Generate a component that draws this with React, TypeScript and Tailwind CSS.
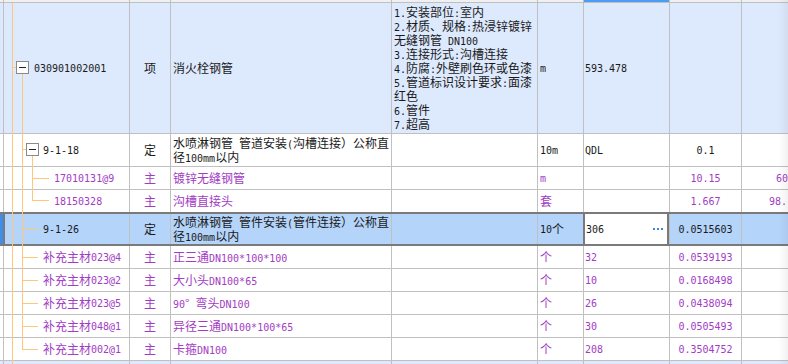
import { FC } from 'react'

// ASCII runs use a half-width mono face, the rest the CJK face
const Txt: FC<{ s: string }> = ({ s }) => (
  <>
    {s
      .split(/([\x20-\x7e]+)/)
      .filter(Boolean)
      .map((p, i) =>
        /^[\x20-\x7e]+$/.test(p) ? (
          <span key={i} className="font-['DejaVu_Sans_Mono',monospace] text-[10px]">
            {p}
          </span>
        ) : (
          <span key={i}>{p}</span>
        )
      )}
  </>
)

const Lines: FC<{ lines: string[] }> = ({ lines }) => (
  <div className="flex flex-col justify-center">
    {lines.map((l, i) => (
      <div key={i} className="h-[14px] leading-[14px] whitespace-nowrap">
        <Txt s={l} />
      </div>
    ))}
  </div>
)

type R = {
  code: string
  pad: string
  kind: string
  name: string[]
  unit: string
  qty?: string
  val?: string
  extra?: string
  extraPad?: string
  purple?: boolean
  h: string
}

const rows: R[] = [
  {
    code: '9-1-18',
    pad: 'pl-[39px]',
    kind: '定',
    name: ['水喷淋钢管 管道安装(沟槽连接）公称直', '径100mm以内'],
    unit: '10m',
    qty: 'QDL',
    val: '0.1',
    h: 'h-[33px] border-b',
  },
  {
    code: '17010131@9',
    pad: 'pl-[50px]',
    kind: '主',
    name: ['镀锌无缝钢管'],
    unit: 'm',
    val: '10.15',
    extra: '60',
    extraPad: 'pl-[34px]',
    purple: true,
    h: 'h-[23px] border-b',
  },
  {
    code: '18150328',
    pad: 'pl-[50px]',
    kind: '主',
    name: ['沟槽直接头'],
    unit: '套',
    val: '1.667',
    extra: '98.',
    extraPad: 'pl-[27px]',
    purple: true,
    h: 'h-[22px]',
  },
]

const subs: R[] = [
  ['补充主材023@4', '正三通DN100*100*100', '32', '0.0539193'],
  ['补充主材023@2', '大小头DN100*65', '10', '0.0168498'],
  ['补充主材023@5', '90° 弯头DN100', '26', '0.0438094'],
  ['补充主材048@1', '异径三通DN100*100*65', '30', '0.0505493'],
  ['补充主材002@1', '卡箍DN100', '208', '0.3504752'],
].map(([code, name, qty, val]) => ({
  code,
  pad: 'pl-[39px]',
  kind: '主',
  name: [name],
  unit: '个',
  qty,
  val,
  purple: true,
  h: 'h-[23px] border-b',
}))

const Row: FC<{ r: R }> = ({ r }) => (
  <div className={`flex border-[#c0c0c0] ${r.h} ${r.purple ? 'text-[#a23cc4]' : ''}`}>
    <div className="w-[3px]" />
    <div className={`flex w-[126px] items-center border-l border-[#c0c0c0] ${r.pad}`}>
      <Txt s={r.code} />
    </div>
    <div className="flex w-[41px] items-center justify-center border-l border-[#c0c0c0]">{r.kind}</div>
    <div className="flex w-[221px] items-center border-l border-[#c0c0c0] pl-[2px]">
      <Lines lines={r.name} />
    </div>
    <div className="flex w-[146px] items-center border-l border-[#c0c0c0] pl-[2px]" />
    <div className="flex w-[46px] items-center border-l border-[#c0c0c0] pl-[2px]">
      <Txt s={r.unit} />
    </div>
    <div className="flex w-[86px] items-center border-l border-[#c0c0c0] pl-[1px]">
      <Txt s={r.qty ?? ''} />
    </div>
    <div className="flex w-[72px] items-center justify-center border-l border-[#c0c0c0]">
      <Txt s={r.val ?? ''} />
    </div>
    <div className={`flex flex-1 items-center overflow-hidden whitespace-nowrap border-l border-[#c0c0c0] ${r.extraPad ?? ''}`}>
      <Txt s={r.extra ?? ''} />
    </div>
  </div>
)

const Box: FC<{ x: number; y: number }> = ({ x, y }) => (
  <g>
    <rect x={x + 0.5} y={y + 0.5} width="12" height="12" fill="#fff" stroke="#8a8a8a" />
    <line x1={x + 3} y1={y + 6.5} x2={x + 10} y2={y + 6.5} stroke="#222" />
  </g>
)

const Tree: FC = () => (
  <svg className="pointer-events-none absolute left-0 top-0" width="60" height="364" shapeRendering="crispEdges">
    <g stroke="#ffc77d" strokeWidth="1">
      <line x1="12.5" y1="3" x2="12.5" y2="364" />
      <line x1="12.5" y1="67.5" x2="16" y2="67.5" />
      <line x1="22.5" y1="74" x2="22.5" y2="349.5" />
      <line x1="22.5" y1="149.5" x2="26" y2="149.5" />
      <line x1="32.5" y1="156" x2="32.5" y2="200.5" />
      <line x1="32.5" y1="178.5" x2="49" y2="178.5" />
      <line x1="32.5" y1="200.5" x2="49" y2="200.5" />
      {[228.5, 257.5, 280.5, 303.5, 326.5, 349.5].map(y => (
        <line key={y} x1="22.5" y1={y} x2="38" y2={y} />
      ))}
    </g>
    <Box x={16} y={61} />
    <Box x={26} y={143} />
  </svg>
)

const spec = [
  '1.安装部位:室内',
  '2.材质、规格:热浸锌镀锌',
  '无缝钢管 DN100',
  '3.连接形式:沟槽连接',
  '4.防腐:外壁刷色环或色漆',
  '5.管道标识设计要求:面漆',
  '红色',
  '6.管件',
  '7.超高',
]

export default function App() {
  return (
    <div className="relative h-[364px] w-[788px] overflow-hidden bg-white font-['Noto_Sans_CJK_SC',sans-serif] text-[12px] text-[#1a1a1a]">
      {/* header remnant */}
      <div className="flex h-[3px] border-b border-[#c0c0c0] bg-[#f0f0f0]">
        <div className="w-[3px]" />
        <div className="w-[126px] border-l border-[#c0c0c0]" />
        <div className="w-[41px] border-l border-[#c0c0c0]" />
        <div className="w-[221px] border-l border-[#c0c0c0]" />
        <div className="w-[146px] border-l border-[#c0c0c0]" />
        <div className="w-[46px] border-l border-[#c0c0c0]" />
        <div className="w-[86px] border-l border-[#c0c0c0] bg-[#4a9cf5]" />
        <div className="w-[72px] border-l border-[#c0c0c0]" />
        <div className="flex-1 border-l border-[#c0c0c0]" />
      </div>

      {/* 清单行 */}
      <div className="flex h-[131px] border-b border-[#c0c0c0] bg-[#dde9fd]">
        <div className="w-[3px]" />
        <div className="flex w-[126px] items-center border-l border-[#c0c0c0] pl-[30px]">
          <Txt s="030901002001" />
        </div>
        <div className="flex w-[41px] items-center justify-center border-l border-[#c0c0c0]">项</div>
        <div className="flex w-[221px] items-center border-l border-[#c0c0c0] pl-[2px]">消火栓钢管</div>
        <div className="flex w-[146px] items-center border-l border-[#c0c0c0] pl-[2px]">
          <Lines lines={spec} />
        </div>
        <div className="flex w-[46px] items-center border-l border-[#c0c0c0] pl-[2px]">
          <Txt s="m" />
        </div>
        <div className="flex w-[86px] items-center border-l border-[#c0c0c0] pl-[1px]">
          <Txt s="593.478" />
        </div>
        <div className="w-[72px] border-l border-[#c0c0c0]" />
        <div className="flex-1 border-l border-[#c0c0c0]" />
      </div>

      {rows.map(r => (
        <Row key={r.code} r={r} />
      ))}

      {/* 选中的定额行 */}
      <div className="flex h-[34px] border-y-2 border-[#7a7a7a] bg-[#b4d4fa]">
        <div className="w-[3px] bg-[#3d8ee8]" />
        <div className="flex w-[126px] items-center border-l-2 border-[#7a7a7a] pl-[38px]">
          <Txt s="9-1-26" />
        </div>
        <div className="flex w-[41px] items-center justify-center border-l border-[#c0c0c0]">定</div>
        <div className="flex w-[221px] items-center border-l border-[#c0c0c0] pl-[2px]">
          <Lines lines={['水喷淋钢管 管件安装(管件连接）公称直', '径100mm以内']} />
        </div>
        <div className="w-[146px] border-l border-[#c0c0c0]" />
        <div className="flex w-[46px] items-center border-l border-[#c0c0c0] pl-[2px]">
          <Txt s="10个" />
        </div>
        <div className="flex w-[86px] items-center border-x-2 border-[#7a7a7a] bg-white pl-[1px] pr-[4px]">
          <Txt s="306" />
          <div className="ml-auto flex gap-[2px]">
            <div className="h-[2px] w-[2px] bg-[#3b88d6]" />
            <div className="h-[2px] w-[2px] bg-[#3b88d6]" />
            <div className="h-[2px] w-[2px] bg-[#3b88d6]" />
          </div>
        </div>
        <div className="flex w-[72px] items-center justify-center border-l border-[#c0c0c0]">
          <Txt s="0.0515603" />
        </div>
        <div className="flex-1 border-l border-[#c0c0c0]" />
      </div>

      {subs.map(r => (
        <Row key={r.code} r={r} />
      ))}

      {/* 下一行 */}
      <div className="flex h-[23px] bg-[#dde9fd]">
        <div className="w-[3px]" />
        <div className="w-[126px] border-l border-[#c0c0c0]" />
        <div className="w-[41px] border-l border-[#c0c0c0]" />
        <div className="w-[221px] border-l border-[#c0c0c0]" />
        <div className="w-[146px] border-l border-[#c0c0c0]" />
        <div className="w-[46px] border-l border-[#c0c0c0]" />
        <div className="w-[86px] border-l border-[#c0c0c0]" />
        <div className="w-[72px] border-l border-[#c0c0c0]" />
        <div className="flex-1 border-l border-[#c0c0c0]" />
      </div>

      <Tree />
      <div className="pointer-events-none absolute inset-y-0 right-0 w-[10px] bg-linear-to-r from-transparent to-black/5" />
    </div>
  )
}
